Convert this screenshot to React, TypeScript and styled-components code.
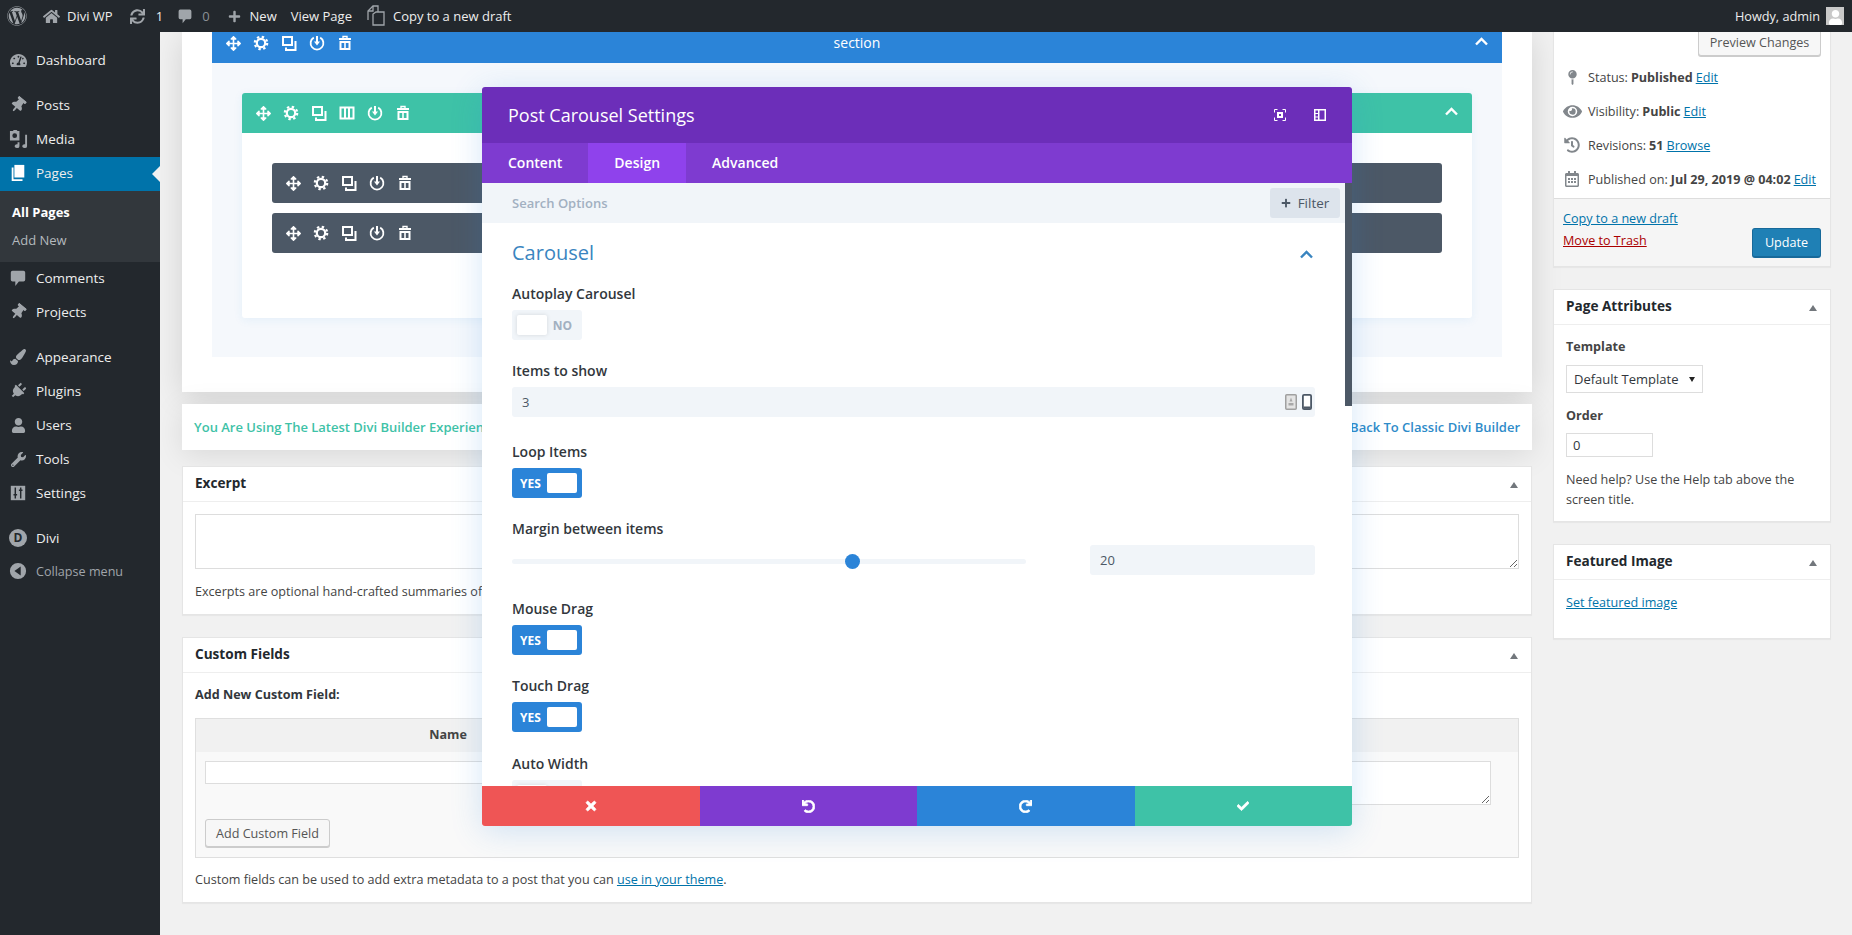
import React from "react";
import styled, { createGlobalStyle } from "styled-components";
import {
  FaWordpress,
  FaHome,
  FaSync,
  FaPlus,
  FaTachometerAlt,
  FaThumbtack,
  FaPaintBrush,
  FaPlug,
  FaUser,
  FaWrench,
  FaArrowsAlt,
  FaTimes,
  FaUndo,
  FaRedo,
  FaCheck,
  FaEye,
  FaHistory,
  FaMapPin,
  FaRegCalendarAlt,
} from "react-icons/fa";

const adminFont = `"Open Sans", "Noto Sans", sans-serif`;

const GlobalStyle = createGlobalStyle`
  html, body {
    margin: 0;
    height: 100%;
    overflow: hidden;
    background: #f1f1f1;
    font-family: ${adminFont};
    font-size: 12.6px;
    color: #444;
  }
  * { box-sizing: border-box; }
  a { color: #0073aa; }
`;

const Page = styled.div`
  position: relative;
  width: 1852px;
  height: 935px;
  overflow: hidden;
`;

/* top admin bar */
const TopBar = styled.div`
  position: relative;
  z-index: 5;
  height: 32px;
  background: #23282d;
  color: #eee;
  display: flex;
  align-items: center;
  font-size: 13px;
  padding-left: 7px;
`;

const BarItem = styled.div<{ $left?: number; $gap?: number; $muted?: boolean }>`
  display: flex;
  align-items: center;
  gap: ${(p) => p.$gap ?? 7}px;
  margin-left: ${(p) => p.$left ?? 0}px;
  color: ${(p) => (p.$muted ? "#8b9095" : "#eee")};
  white-space: nowrap;
  svg {
    color: #a0a5aa;
    display: block;
  }
`;

const Howdy = styled(BarItem)`
  margin-left: auto;
  padding-right: 8px;
  gap: 6px;
  font-size: 12.7px;
`;

const Avatar = styled.div`
  width: 18px;
  height: 18px;
  background: #c9c9c9;
  display: flex;
  align-items: flex-end;
  justify-content: center;
  overflow: hidden;
  svg {
    color: #fff;
  }
`;

const Below = styled.div`
  display: flex;
  height: 903px;
`;

/* left admin menu */
const Sidebar = styled.nav`
  position: relative;
  z-index: 4;
  width: 160px;
  flex: none;
  background: #23282d;
  padding-top: 12px;
`;

const MenuGroup = styled.div`
  margin-bottom: 11px;
`;

const MenuItem = styled.div<{ $active?: boolean }>`
  position: relative;
  height: 34px;
  padding-bottom: 2px;
  display: flex;
  align-items: center;
  font-size: 13.5px;
  color: #eee;
  background: ${(p) => (p.$active ? "#0073aa" : "transparent")};
  ${(p) =>
    p.$active
      ? `&::after {
          content: "";
          position: absolute;
          right: 0;
          top: 9px;
          border: 8px solid transparent;
          border-right-color: #f1f1f1;
        }`
      : ""}
`;

const MenuIcon = styled.span<{ $active?: boolean }>`
  width: 36px;
  flex: none;
  display: flex;
  justify-content: center;
  color: ${(p) => (p.$active ? "#fff" : "#a0a5aa")};
  svg {
    display: block;
  }
`;

const SubMenu = styled.div`
  height: 71px;
  background: #32373c;
  padding-top: 7px;
`;

const SubItem = styled.div<{ $current?: boolean }>`
  height: 28px;
  line-height: 28px;
  padding-left: 12px;
  font-size: 13px;
  color: ${(p) => (p.$current ? "#fff" : "#b4b9be")};
  font-weight: ${(p) => (p.$current ? 700 : 400)};
`;

const DiviMark = styled.span`
  width: 18px;
  height: 18px;
  border-radius: 50%;
  background: #a0a5aa;
  color: #23282d;
  font-size: 12px;
  font-weight: 700;
  line-height: 18px;
  text-align: center;
`;

const CollapseRow = styled.div`
  height: 32px;
  padding-bottom: 2px;
  display: flex;
  align-items: center;
  color: #a0a5aa;
  font-size: 12.6px;
`;

const Content = styled.main`
  flex: 1;
  display: flex;
  gap: 21px;
  padding: 0 20px 0 22px;
  overflow: hidden;
`;

const LeftColumn = styled.div`
  width: 1350px;
  flex: none;
`;

const RightColumn = styled.div`
  width: 278px;
  flex: none;
  margin-top: -10px;
`;

/* builder blocks */
const BuilderPanel = styled.section`
  height: 360px;
  background: #fff;
  padding: 0 30px;
  box-shadow: 0 5px 30px rgba(0, 0, 0, 0.13);
  overflow: hidden;
`;

const BlockBar = styled.div<{ $bg: string; $pull?: number }>`
  position: relative;
  height: 40px;
  margin-top: ${(p) => p.$pull ?? 0}px;
  padding-left: 14px;
  display: flex;
  align-items: center;
  gap: 12px;
  color: #fff;
  background: ${(p) => p.$bg};
  border-radius: 3px 3px 0 0;
  svg {
    display: block;
    flex: none;
  }
`;

const SectionBody = styled.div`
  height: 294px;
  background: #f5f8fc;
  padding: 30px 30px 0;
`;

const BarLabel = styled.span`
  position: absolute;
  left: 0;
  right: 0;
  top: 10px;
  line-height: 20px;
  text-align: center;
  font-size: 14px;
  pointer-events: none;
`;

const BarChevron = styled.span`
  margin-left: auto;
  margin-right: 14px;
  margin-top: -3px;
  display: flex;
`;

const RowBlock = styled.div`
  border-radius: 3px;
  background: #fff;
  box-shadow: 0 2px 10px rgba(43, 135, 218, 0.08);
`;

const RowBody = styled.div`
  height: 185px;
  padding: 30px 30px 0;
  display: flex;
  flex-direction: column;
  gap: 10px;
`;

const ModuleBar = styled(BlockBar)`
  border-radius: 3px;
`;

const Notice = styled.div`
  margin-top: 12px;
  height: 46px;
  padding: 0 12px;
  background: #fff;
  display: flex;
  align-items: center;
  justify-content: space-between;
  font-size: 13px;
  font-weight: 600;
  box-shadow: 0 5px 30px rgba(0, 0, 0, 0.1);
`;

const NoticeText = styled.span<{ $color: string }>`
  color: ${(p) => p.$color};
`;

const Card = styled.section<{ $top?: number; $height?: number }>`
  position: relative;
  margin-top: ${(p) => p.$top ?? 0}px;
  ${(p) => (p.$height ? `height: ${p.$height}px;` : "")}
  background: #fff;
  border: 1px solid #e5e5e5;
  box-shadow: 0 1px 1px rgba(0, 0, 0, 0.04);
`;

const CardHeader = styled.h2`
  margin: 0;
  height: 35px;
  padding: 0 12px 4px;
  display: flex;
  align-items: center;
  justify-content: space-between;
  font-size: 13.6px;
  font-weight: 700;
  color: #23282d;
  border-bottom: 1px solid #eee;
`;

const Caret = styled.span`
  width: 0;
  height: 0;
  margin-right: 1px;
  margin-top: 5px;
  border-left: 4.5px solid transparent;
  border-right: 4.5px solid transparent;
  border-bottom: 6px solid #72777c;
`;

const CardBody = styled.div`
  padding: 12px;
`;

const LinkBody = styled(CardBody)`
  padding-top: 14px;
`;

const BigArea = styled.textarea`
  display: block;
  width: 100%;
  height: 55px;
  border: 1px solid #ddd;
  background: #fff;
  margin: 0 0 1px;
`;

const HelpText = styled.p`
  margin: 13px 0 0;
  font-size: 12.6px;
  line-height: 20px;
`;

const FieldHeading = styled.div`
  font-size: 12.6px;
  font-weight: 700;
  color: #32373c;
  line-height: 18px;
  margin-top: 1px;
`;

const MetaTable = styled.div`
  margin-top: 14px;
  margin-bottom: -1px;
  height: 140px;
  border: 1px solid #dfdfdf;
  background: #f9f9f9;
`;

const MetaHead = styled.div`
  height: 33px;
  padding-bottom: 2px;
  background: #f1f1f1;
  display: grid;
  grid-template-columns: 504px 1fr;
  align-items: center;
  text-align: center;
  font-weight: 700;
  color: #444;
`;

const MetaRow = styled.div`
  display: grid;
  grid-template-columns: 504px 1fr;
  padding: 9px 27px 0 9px;
  height: 67px;
`;

const MetaInput = styled.input`
  display: block;
  width: 300px;
  height: 23px;
  border: 1px solid #ddd;
  background: #fff;
`;

const MetaArea = styled.textarea`
  display: block;
  width: 100%;
  height: 44px;
  border: 1px solid #ddd;
  background: #fff;
  margin: 0;
`;

const SecondaryButton = styled.button`
  height: 28px;
  width: 123px;
  padding: 0;
  font-family: inherit;
  font-size: 12.6px;
  color: #555;
  background: #f7f7f7;
  border: 1px solid #ccc;
  border-radius: 3px;
  box-shadow: 0 1px 0 #ccc;
`;

const AddFieldButton = styled(SecondaryButton)`
  display: block;
  margin: 0 0 0 9px;
  width: 125px;
`;

/* publish box on the right */
const PreviewRow = styled.div`
  display: flex;
  justify-content: flex-end;
  padding: 5px 9px 0 0;
`;

const PublishList = styled.div`
  padding-top: 4px;
  height: 142px;
`;

const PublishRow = styled.div`
  height: 34px;
  display: flex;
  align-items: center;
  padding-left: 8px;
  white-space: nowrap;
  a {
    margin-left: 3px;
  }
  b {
    margin-left: 3px;
    color: #444;
  }
`;

const PublishIcon = styled.span`
  width: 20px;
  margin-right: 6px;
  display: flex;
  justify-content: center;
  color: #82878c;
`;

const PublishActions = styled.div`
  height: 68px;
  background: #f5f5f5;
  border-top: 1px solid #ddd;
  padding: 11px 9px 0;
  display: flex;
  justify-content: space-between;
`;

const ActionLinks = styled.div`
  display: flex;
  flex-direction: column;
  gap: 4px;
  line-height: 18px;
`;

const TrashLink = styled.a`
  color: #a00;
`;

const UpdateButton = styled.button`
  width: 69px;
  height: 30px;
  margin-top: 18px;
  font-family: inherit;
  font-size: 12.6px;
  color: #fff;
  background: #1f80b5;
  border: 1px solid #17699a;
  border-bottom-width: 2px;
  border-radius: 3px;
`;

const SmallLabel = styled.div<{ $top: number }>`
  margin-top: ${(p) => p.$top}px;
  font-weight: 700;
  color: #444;
  line-height: 18px;
`;

const SelectBox = styled.div`
  margin-top: 9px;
  width: 137px;
  height: 28px;
  padding: 0 7px;
  display: flex;
  align-items: center;
  justify-content: space-between;
  border: 1px solid #ddd;
  color: #32373c;
  font-size: 13px;
  &::after {
    content: "";
    border-left: 3.5px solid transparent;
    border-right: 3.5px solid transparent;
    border-top: 5px solid #222;
  }
`;

const OrderInput = styled.input`
  display: block;
  margin-top: 8px;
  width: 87px;
  height: 24px;
  padding: 0 6px;
  border: 1px solid #ddd;
  font-family: inherit;
  font-size: 13px;
  color: #32373c;
`;

/* settings modal, lies over the builder */
const Modal = styled.div`
  position: absolute;
  z-index: 3;
  left: 482px;
  top: 87px;
  width: 870px;
  height: 739px;
  display: flex;
  flex-direction: column;
  border-radius: 3px;
  background: #fff;
  overflow: hidden;
  font-family: "Open Sans", sans-serif;
`;

const ModalShadow = styled.div`
  position: absolute;
  z-index: 2;
  left: 482px;
  top: 87px;
  width: 870px;
  height: 739px;
  box-shadow: 0 5px 30px rgba(43, 135, 218, 0.2);
`;

const ModalHeader = styled.header`
  height: 56px;
  flex: none;
  background: #6c2eb9;
  color: #fff;
  display: flex;
  align-items: center;
  padding: 0 26px;
  gap: 28px;
  h1 {
    margin: 0 auto 0 0;
    font-size: 18px;
    font-weight: 500;
  }
  svg {
    display: block;
  }
`;

const Tabs = styled.div`
  height: 40px;
  flex: none;
  display: flex;
  background: #7e3bd0;
`;

const Tab = styled.div<{ $active?: boolean }>`
  padding: 0 26px;
  line-height: 40px;
  font-size: 14px;
  font-weight: 600;
  color: #fff;
  background: ${(p) => (p.$active ? "#8f42ec" : "transparent")};
`;

const ModalMiddle = styled.div`
  position: relative;
  flex: 1;
  min-height: 0;
  overflow: hidden;
  padding-right: 7px;
`;

const ScrollThumb = styled.div`
  position: absolute;
  right: 0;
  top: 0;
  width: 7px;
  height: 223px;
  background: #4c5866;
`;

const SearchBar = styled.div`
  height: 40px;
  background: #f1f5f9;
  display: flex;
  align-items: center;
  justify-content: space-between;
  padding: 0 5px 0 30px;
  font-size: 13px;
  font-weight: 600;
  color: #a2b0c1;
`;

const FilterButton = styled.div`
  width: 70px;
  height: 30px;
  border-radius: 3px;
  background: #dde4ec;
  color: #4c5866;
  display: flex;
  align-items: center;
  justify-content: center;
  gap: 7px;
  font-size: 13.5px;
  font-weight: 500;
`;

const GroupBody = styled.div`
  padding: 14px 30px 0 30px;
`;

const GroupTitle = styled.div`
  height: 30px;
  display: flex;
  align-items: center;
  justify-content: space-between;
  margin-bottom: 17px;
  font-size: 20px;
  font-weight: 400;
  color: #3a85c0;
  svg {
    margin-right: 2px;
    margin-top: 4px;
  }
`;

const Field = styled.div<{ $after: number }>`
  margin-bottom: ${(p) => p.$after}px;
`;

const FieldLabel = styled.div`
  height: 20px;
  line-height: 20px;
  margin-bottom: 6px;
  font-size: 14px;
  font-weight: 600;
  color: #32373c;
`;

const ToggleBox = styled.div<{ $on?: boolean }>`
  width: 70px;
  height: 30px;
  padding: 0 5px 0 ${(p) => (p.$on ? "8px" : "5px")};
  border-radius: 3px;
  display: flex;
  align-items: center;
  justify-content: space-between;
  flex-direction: ${(p) => (p.$on ? "row" : "row-reverse")};
  background: ${(p) => (p.$on ? "#2b84d8" : "#f1f5f9")};
  color: ${(p) => (p.$on ? "#fff" : "#a2b0c1")};
  font-size: 12px;
  font-weight: 700;
`;

const ToggleKnob = styled.span<{ $on?: boolean }>`
  width: 30px;
  height: 20px;
  border-radius: 2px;
  background: #fff;
  box-shadow: ${(p) => (p.$on ? "none" : "0 0 4px rgba(0,0,0,.12)")};
`;

const OffText = styled.span`
  margin-right: 5px;
`;

const ValueBox = styled.div`
  position: relative;
  height: 30px;
  padding: 0 10px;
  display: flex;
  align-items: center;
  justify-content: space-between;
  background: #f1f5f9;
  border-radius: 3px;
  font-size: 13px;
  color: #4c5866;
`;

const DeviceIcons = styled.span`
  display: flex;
  align-items: center;
  gap: 5px;
  margin-right: -7px;
`;

const SliderRow = styled.div`
  display: flex;
  align-items: center;
  justify-content: space-between;
  margin-top: 6px;
`;

const SliderTrack = styled.div`
  position: relative;
  width: 514px;
  height: 5px;
  margin-top: 2px;
  border-radius: 3px;
  background: #f1f5f9;
`;

const SliderThumb = styled.span`
  position: absolute;
  left: 333px;
  top: -5px;
  width: 15px;
  height: 15px;
  border-radius: 50%;
  background: #2b84d8;
`;

const SliderValue = styled(ValueBox)`
  width: 225px;
`;

const Footer = styled.footer`
  height: 40px;
  flex: none;
  display: grid;
  grid-template-columns: repeat(4, 1fr);
`;

const FooterButton = styled.div<{ $bg: string }>`
  background: ${(p) => p.$bg};
  color: #fff;
  display: flex;
  align-items: center;
  justify-content: center;
  svg {
    stroke: currentColor;
    stroke-width: 30;
  }
`;

/* ---- drawings ---- */
const Gear = () => (
  <svg width="16" height="16" viewBox="0 0 16 16" fill="none" stroke="currentColor">
    <circle cx="8" cy="8" r="4.2" strokeWidth="2.2" />
    <circle cx="8" cy="8" r="6.2" strokeWidth="2.2" strokeDasharray="2.4 2.47" />
  </svg>
);

const Duplicate = () => (
  <svg width="16" height="16" viewBox="0 0 16 16" fill="none" stroke="currentColor" strokeWidth="2">
    <rect x="2" y="2" width="9" height="8" />
    <path d="M14.5 6v9H5v-2.5" />
  </svg>
);

const Columns = () => (
  <svg width="16" height="16" viewBox="0 0 16 16" fill="none" stroke="currentColor" strokeWidth="2">
    <rect x="1.5" y="2.5" width="13" height="11" />
    <path d="M6 2.5v11M10 2.5v11" />
  </svg>
);

const Power = () => (
  <svg width="16" height="16" viewBox="0 0 16 16" fill="none" stroke="currentColor" strokeWidth="1.8">
    <path d="M4.8 2.6a6.4 6.4 0 1 0 6.4 0" />
    <path d="M8 1v6" strokeWidth="2" />
    <path d="M5 6.5h6L8 10.5z" fill="currentColor" stroke="none" />
  </svg>
);

const Trash = () => (
  <svg width="16" height="16" viewBox="0 0 16 16" fill="none" stroke="currentColor" strokeWidth="2">
    <path d="M2 4h12" />
    <path d="M6 3.5V1.5h4v2" strokeWidth="1.4" />
    <rect x="3.5" y="7" width="9" height="7" />
    <path d="M8 7v7" strokeWidth="1.6" />
  </svg>
);

const Chevron = ({ color = "currentColor" }: { color?: string }) => (
  <svg width="13" height="9" viewBox="0 0 13 9" fill="none" stroke={color} strokeWidth="2.4">
    <path d="M1 7.5l5.5-5.5 5.5 5.5" />
  </svg>
);

const Bubble = ({ size = 16 }: { size?: number }) => (
  <svg width={size} height={size} viewBox="0 0 20 20" fill="currentColor">
    <path d="M4 2h12a2 2 0 0 1 2 2v8a2 2 0 0 1-2 2h-5l-4 5v-5H4a2 2 0 0 1-2-2V4a2 2 0 0 1 2-2z" />
  </svg>
);

const MediaIcon = () => (
  <svg width="19" height="19" viewBox="0 0 20 20" fill="currentColor">
    <path d="M1 1h3l1-1h3l1 1h2v10H1zM6 3.5a2.5 2.5 0 1 0 0 5 2.5 2.5 0 0 0 0-5z" fillRule="evenodd" />
    <path d="M17 5h2v12a2.5 2 0 1 1-2-2zM9 13h2v4a2.5 2 0 1 1-2-2z" />
  </svg>
);

const PagesIcon = () => (
  <svg width="18" height="18" viewBox="0 0 20 20" fill="currentColor">
    <path d="M6 1h11v14H6z" />
    <path d="M3 4h2v13h10v2H3z" />
  </svg>
);

const SettingsIcon = () => (
  <svg width="18" height="18" viewBox="0 0 20 20">
    <rect x="2" y="2" width="16" height="16" fill="currentColor" />
    <path d="M7 4v12M13 4v12M5 12h4M11 7h4" stroke="#23282d" strokeWidth="1.6" />
  </svg>
);

const CollapseIcon = () => (
  <svg width="18" height="18" viewBox="0 0 20 20" fill="currentColor">
    <path
      fillRule="evenodd"
      d="M10 1a9 9 0 1 1 0 18 9 9 0 0 1 0-18zM13 5L6 10l7 5z"
    />
  </svg>
);

const CopyDraftIcon = () => (
  <svg width="20" height="24" viewBox="0 0 20 24" fill="none" stroke="#a0a5aa" strokeWidth="1.3">
    <path d="M2 16V7l5-5h5v6" />
    <path d="M7 2v5H2" />
    <path d="M7 18V10l3-2h8v13H7z" />
  </svg>
);

const ExpandIcon = () => (
  <svg width="12" height="12" viewBox="0 0 12 12" fill="none" stroke="#fff" strokeWidth="1">
    <path d="M3.5 .5H.5V3.5M8.5 .5h3V3.5M3.5 11.5H.5V8.5M8.5 11.5h3V8.5" />
    <rect x="3" y="3" width="6" height="6" fill="#fff" stroke="none" />
    <rect x="5" y="5" width="2" height="2" fill="#6c2eb9" stroke="none" />
  </svg>
);

const SplitIcon = () => (
  <svg width="12" height="12" viewBox="0 0 12 12">
    <rect width="12" height="12" fill="#fff" />
    <rect x="1.5" y="1.5" width="2.5" height="2.5" fill="#6c2eb9" />
    <rect x="1.5" y="5" width="2.5" height="2.5" fill="#6c2eb9" />
    <rect x="1.5" y="8.5" width="2.5" height="2" fill="#6c2eb9" />
    <rect x="5.5" y="1.5" width="5" height="9" fill="#6c2eb9" />
  </svg>
);

const TabletIcon = () => (
  <svg width="12" height="16" viewBox="0 0 12 16">
    <rect x=".75" y=".75" width="10.5" height="14.5" rx="1" fill="#e4e4e4" stroke="#a0a0a0" strokeWidth="1.5" />
    <path d="M6 3.5l1.5 4h-3zM3.5 9h5v2.5h-5z" fill="#a8a8a8" />
  </svg>
);

const PhoneIcon = () => (
  <svg width="10" height="16" viewBox="0 0 10 16">
    <rect x=".9" y=".9" width="8.2" height="14.2" rx="1.2" fill="#fff" stroke="#4c5866" strokeWidth="1.8" />
    <rect x="1.5" y="12.5" width="7" height="2.2" fill="#4c5866" />
  </svg>
);

const BlockIcons = ({ columns }: { columns?: boolean }) => (
  <>
    <FaArrowsAlt size={15} />
    <Gear />
    <Duplicate />
    {columns && <Columns />}
    <Power />
    <Trash />
  </>
);

const menuTop = [{ label: "Dashboard", icon: <FaTachometerAlt size={17} /> }];
const menuContent = [
  { label: "Posts", icon: <FaThumbtack size={16} style={{ transform: "rotate(40deg)" }} /> },
  { label: "Media", icon: <MediaIcon /> },
];
const menuAfterPages = [
  { label: "Comments", icon: <Bubble size={18} /> },
  { label: "Projects", icon: <FaThumbtack size={16} style={{ transform: "rotate(40deg)" }} /> },
];
const menuAdmin = [
  { label: "Appearance", icon: <FaPaintBrush size={16} /> },
  { label: "Plugins", icon: <FaPlug size={16} style={{ transform: "rotate(45deg)" }} /> },
  { label: "Users", icon: <FaUser size={15} /> },
  { label: "Tools", icon: <FaWrench size={15} /> },
  { label: "Settings", icon: <SettingsIcon /> },
];

const renderItems = (items: { label: string; icon: React.ReactNode }[]) =>
  items.map((item) => (
    <MenuItem key={item.label}>
      <MenuIcon>{item.icon}</MenuIcon>
      {item.label}
    </MenuItem>
  ));

const Toggle = ({ on }: { on?: boolean }) => (
  <ToggleBox $on={on}>
    {on ? <span>YES</span> : <OffText>NO</OffText>}
    <ToggleKnob $on={on} />
  </ToggleBox>
);

export default function App() {
  return (
    <Page>
      <GlobalStyle />
      <TopBar>
        <FaWordpress size={20} color="#a0a5aa" />
        <BarItem $left={16}>
          <FaHome size={17} />
          Divi WP
        </BarItem>
        <BarItem $left={17} $gap={11}>
          <FaSync size={15} />
          <span>1</span>
        </BarItem>
        <BarItem $left={14} $gap={9} $muted>
          <Bubble />
          <span>0</span>
        </BarItem>
        <BarItem $left={18} $gap={9}>
          <FaPlus size={13} />
          New
        </BarItem>
        <BarItem $left={14}>View Page</BarItem>
        <BarItem $left={14}>
          <CopyDraftIcon />
          Copy to a new draft
        </BarItem>
        <Howdy>
          Howdy, admin
          <Avatar>
            <FaUser size={15} />
          </Avatar>
        </Howdy>
      </TopBar>

      <Below>
        <Sidebar>
          <MenuGroup>{renderItems(menuTop)}</MenuGroup>
          <MenuGroup>
            {renderItems(menuContent)}
            <MenuItem $active>
              <MenuIcon $active>
                <PagesIcon />
              </MenuIcon>
              Pages
            </MenuItem>
            <SubMenu>
              <SubItem $current>All Pages</SubItem>
              <SubItem>Add New</SubItem>
            </SubMenu>
            {renderItems(menuAfterPages)}
          </MenuGroup>
          <MenuGroup>{renderItems(menuAdmin)}</MenuGroup>
          <MenuItem>
            <MenuIcon>
              <DiviMark>D</DiviMark>
            </MenuIcon>
            Divi
          </MenuItem>
          <CollapseRow>
            <MenuIcon>
              <CollapseIcon />
            </MenuIcon>
            Collapse menu
          </CollapseRow>
        </Sidebar>

        <Content>
          <LeftColumn>
            <BuilderPanel>
              <BlockBar $bg="#2b84d8" $pull={-9}>
                <BlockIcons />
                <BarLabel>section</BarLabel>
                <BarChevron>
                  <Chevron />
                </BarChevron>
              </BlockBar>
              <SectionBody>
                <RowBlock>
                  <BlockBar $bg="#3ec2a7">
                    <BlockIcons columns />
                    <BarChevron>
                      <Chevron />
                    </BarChevron>
                  </BlockBar>
                  <RowBody>
                    <ModuleBar $bg="#4c5866">
                      <BlockIcons />
                    </ModuleBar>
                    <ModuleBar $bg="#4c5866">
                      <BlockIcons />
                    </ModuleBar>
                  </RowBody>
                </RowBlock>
              </SectionBody>
            </BuilderPanel>

            <Notice>
              <NoticeText $color="#3ec2a7">You Are Using The Latest Divi Builder Experience.</NoticeText>
              <NoticeText $color="#2e8bc9">Back To Classic Divi Builder</NoticeText>
            </Notice>

            <Card $top={16} $height={149}>
              <CardHeader>
                Excerpt
                <Caret />
              </CardHeader>
              <CardBody>
                <BigArea />
                <HelpText>
                  Excerpts are optional hand-crafted summaries of your content that can be used in your theme.
                </HelpText>
              </CardBody>
            </Card>

            <Card $top={22} $height={266}>
              <CardHeader>
                Custom Fields
                <Caret />
              </CardHeader>
              <CardBody>
                <FieldHeading>Add New Custom Field:</FieldHeading>
                <MetaTable>
                  <MetaHead>
                    <span>Name</span>
                    <span>Value</span>
                  </MetaHead>
                  <MetaRow>
                    <MetaInput />
                    <MetaArea />
                  </MetaRow>
                  <AddFieldButton>Add Custom Field</AddFieldButton>
                </MetaTable>
                <HelpText>
                  Custom fields can be used to add extra metadata to a post that you can <a href="#">use in your theme</a>.
                </HelpText>
              </CardBody>
            </Card>
          </LeftColumn>

          <RightColumn>
            <Card $height={245}>
              <PreviewRow>
                <SecondaryButton>Preview Changes</SecondaryButton>
              </PreviewRow>
              <PublishList>
                <PublishRow>
                  <PublishIcon>
                    <FaMapPin size={15} />
                  </PublishIcon>
                  Status:<b>Published</b>
                  <a href="#">Edit</a>
                </PublishRow>
                <PublishRow>
                  <PublishIcon>
                    <FaEye size={19} />
                  </PublishIcon>
                  Visibility:<b>Public</b>
                  <a href="#">Edit</a>
                </PublishRow>
                <PublishRow>
                  <PublishIcon>
                    <FaHistory size={16} />
                  </PublishIcon>
                  Revisions:<b>51</b>
                  <a href="#">Browse</a>
                </PublishRow>
                <PublishRow>
                  <PublishIcon>
                    <FaRegCalendarAlt size={16} />
                  </PublishIcon>
                  Published on:<b>Jul 29, 2019 @ 04:02</b>
                  <a href="#">Edit</a>
                </PublishRow>
              </PublishList>
              <PublishActions>
                <ActionLinks>
                  <a href="#">Copy to a new draft</a>
                  <TrashLink href="#">Move to Trash</TrashLink>
                </ActionLinks>
                <UpdateButton>Update</UpdateButton>
              </PublishActions>
            </Card>

            <Card $top={22} $height={233}>
              <CardHeader>
                Page Attributes
                <Caret />
              </CardHeader>
              <CardBody>
                <SmallLabel $top={1}>Template</SmallLabel>
                <SelectBox>Default Template</SelectBox>
                <SmallLabel $top={14}>Order</SmallLabel>
                <OrderInput readOnly value="0" />
                <HelpText>Need help? Use the Help tab above the screen title.</HelpText>
              </CardBody>
            </Card>

            <Card $top={22} $height={95}>
              <CardHeader>
                Featured Image
                <Caret />
              </CardHeader>
              <LinkBody>
                <a href="#">Set featured image</a>
              </LinkBody>
            </Card>
          </RightColumn>
        </Content>
      </Below>

      <ModalShadow />
      <Modal>
        <ModalHeader>
          <h1>Post Carousel Settings</h1>
          <ExpandIcon />
          <SplitIcon />
        </ModalHeader>
        <Tabs>
          <Tab>Content</Tab>
          <Tab $active>Design</Tab>
          <Tab>Advanced</Tab>
        </Tabs>
        <ModalMiddle>
          <ScrollThumb />
          <SearchBar>
            Search Options
            <FilterButton>
              <FaPlus size={10} />
              Filter
            </FilterButton>
          </SearchBar>
          <GroupBody>
            <GroupTitle>
              Carousel
              <Chevron color="#3a85c0" />
            </GroupTitle>
            <Field $after={21}>
              <FieldLabel>Autoplay Carousel</FieldLabel>
              <Toggle />
            </Field>
            <Field $after={25}>
              <FieldLabel>Items to show</FieldLabel>
              <ValueBox>
                3
                <DeviceIcons>
                  <TabletIcon />
                  <PhoneIcon />
                </DeviceIcons>
              </ValueBox>
            </Field>
            <Field $after={21}>
              <FieldLabel>Loop Items</FieldLabel>
              <Toggle on />
            </Field>
            <Field $after={24}>
              <FieldLabel>Margin between items</FieldLabel>
              <SliderRow>
                <SliderTrack>
                  <SliderThumb />
                </SliderTrack>
                <SliderValue>20</SliderValue>
              </SliderRow>
            </Field>
            <Field $after={21}>
              <FieldLabel>Mouse Drag</FieldLabel>
              <Toggle on />
            </Field>
            <Field $after={22}>
              <FieldLabel>Touch Drag</FieldLabel>
              <Toggle on />
            </Field>
            <Field $after={0}>
              <FieldLabel>Auto Width</FieldLabel>
              <Toggle />
            </Field>
          </GroupBody>
        </ModalMiddle>
        <Footer>
          <FooterButton $bg="#ef5555">
            <FaTimes size={14} />
          </FooterButton>
          <FooterButton $bg="#7e3bd0">
            <FaUndo size={13} />
          </FooterButton>
          <FooterButton $bg="#2b84d8">
            <FaRedo size={13} />
          </FooterButton>
          <FooterButton $bg="#3ec2a7">
            <FaCheck size={12} />
          </FooterButton>
        </Footer>
      </Modal>
    </Page>
  );
}
